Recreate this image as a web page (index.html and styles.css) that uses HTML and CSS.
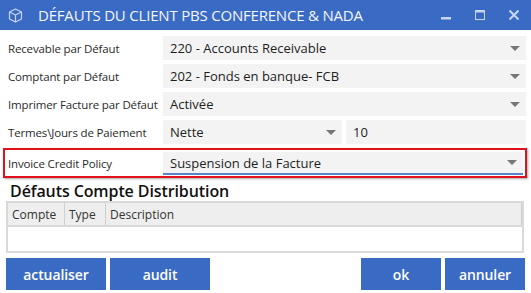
FILE: index.html
```html
<!DOCTYPE html>
<html lang="fr">
<head>
<meta charset="utf-8">
<link rel="stylesheet" href="styles.css">
</head>
<body>
<div class="window">
  <div class="titlebar">
    <svg class="app-icon" width="15" height="15" viewBox="0 0 15 15">
      <path d="M7.5 1 L13.5 4 L13.5 11 L7.5 14 L1.5 11 L1.5 4 Z M1.5 4 L7.5 7 L13.5 4 M7.5 7 L7.5 14" fill="none" stroke="#c9d6f0" stroke-width="1.2" stroke-linejoin="round"/>
    </svg>
    <span class="title">DÉFAUTS DU CLIENT PBS CONFERENCE &amp; NADA</span>
    <div class="controls">
      <svg width="10" height="10" viewBox="0 0 10 10"><rect x="0" y="7" width="10" height="2.5" fill="#c9d6f0"/></svg>
      <svg width="10" height="10" viewBox="0 0 10 10"><rect x="0.5" y="0.5" width="9" height="9" fill="none" stroke="#c9d6f0"/><rect x="0.5" y="0.5" width="9" height="2" fill="#c9d6f0"/></svg>
      <svg width="10" height="10" viewBox="0 0 10 10"><path d="M0.5 0.5 L9.5 9.5 M9.5 0.5 L0.5 9.5" stroke="#c9d6f0" stroke-width="2"/></svg>
    </div>
  </div>

  <div class="form">
    <div class="row">
      <label class="label">Recevable par Défaut</label>
      <div class="field select"><span>220 - Accounts Receivable</span><i class="arrow"></i></div>
    </div>
    <div class="row">
      <label class="label">Comptant par Défaut</label>
      <div class="field select"><span>202 - Fonds en banque- FCB</span><i class="arrow"></i></div>
    </div>
    <div class="row">
      <label class="label">Imprimer Facture par Défaut</label>
      <div class="field select"><span>Activée</span><i class="arrow"></i></div>
    </div>
    <div class="row">
      <label class="label">Termes\Jours de Paiement</label>
      <div class="split">
        <div class="field select terms"><span>Nette</span><i class="arrow"></i></div>
        <div class="field days"><span>10</span></div>
      </div>
    </div>
    <div class="row highlight">
      <label class="label">Invoice Credit Policy</label>
      <div class="field select focused"><span>Suspension de la Facture</span><i class="arrow"></i></div>
    </div>
  </div>

  <h2 class="section">Défauts Compte Distribution</h2>
  <div class="grid">
    <div class="grid-head">
      <div class="col c1">Compte</div>
      <div class="col c2">Type</div>
      <div class="col c3">Description</div>
    </div>
    <div class="grid-body"></div>
  </div>

  <div class="buttons">
    <button class="btn w100">actualiser</button>
    <button class="btn w100">audit</button>
    <span class="spacer"></span>
    <button class="btn w80">ok</button>
    <button class="btn w80">annuler</button>
  </div>
</div>
</body>
</html>
```

FILE: styles.css
```css
* { box-sizing: border-box; }
html, body { margin: 0; padding: 0; background: #fff; }
body {
  width: 531px;
  height: 293px;
  overflow: hidden;
  font-family: "Open Sans", "Noto Sans", sans-serif;
  color: #222;
}
.titlebar {
  height: 30px;
  background: #3a6bc4;
  display: flex;
  align-items: center;
  padding-left: 8px;
  color: #fff;
}
.app-icon { margin-top: 1px; }
.title {
  margin-left: 15px;
  font-size: 15px;
  letter-spacing: -0.2px;
  color: #f4f6fb;
  font-weight: 400;
}
.controls {
  margin-left: auto;
  display: flex;
  gap: 24px;
  padding-right: 12px;
  align-items: center;
}
.form {
  padding: 6px 5px 0 3px;
  display: flex;
  flex-direction: column;
  gap: 4px;
}
.row {
  display: flex;
  align-items: center;
  height: 24px;
}
.label {
  width: 160px;
  padding-left: 5px;
  font-size: 11.5px;
  color: #2a2a2a;
  white-space: nowrap;
  letter-spacing: -0.15px;
}
.field {
  height: 24px;
  background: #f3f3f3;
  display: flex;
  align-items: center;
  padding-left: 7px;
  font-size: 13px;
  color: #1e1e1e;
  position: relative;
}
.select { flex: 1; }
.arrow {
  margin-left: auto;
  margin-right: 6px;
  width: 0;
  height: 0;
  border-left: 5.5px solid transparent;
  border-right: 5.5px solid transparent;
  border-top: 5.5px solid #777;
}
.split {
  flex: 1;
  display: flex;
  gap: 4px;
}
.terms { flex: 0 0 179px; }
.days { flex: 1; }
.highlight {
  height: 30px;
  margin-top: 0;
  border: 2px solid #e2101a;
  box-shadow: 1px 1px 2px rgba(0,0,0,0.35);
  margin-right: -1px;
}
.highlight .label { width: 158px; padding-left: 3px; }
.focused {
  height: 23px;
  margin-top: 1px;
  border-bottom: 2px solid #5b84c8;
  margin-right: 2px;
}
.section {
  margin: 3px 0 0 10px;
  font-size: 16px;
  font-weight: 600;
  color: #111;
  line-height: 20px;
  letter-spacing: -0.1px;
}
.grid {
  margin: 0 7px 0 6px;
  border: 2px solid #d9d9d9;
  height: 52px;
}
.grid-head {
  display: flex;
  height: 24px;
  background: #eeeeee;
  border-bottom: 2px solid #d9d9d9;
  font-size: 12px;
  color: #333;
}
.col {
  display: flex;
  align-items: center;
  padding-left: 4px;
  border-right: 1px solid #cfcfcf;
}
.c1 { width: 57px; }
.c2 { width: 41px; }
.c3 { flex: 1; border-right: 1px solid #cfcfcf; }
.buttons {
  display: flex;
  gap: 4px;
  margin: 5px 6px 0 6px;
}
.spacer { flex: 1; }
.btn {
  height: 32px;
  background: #3a6bc4;
  color: #fff;
  border: 0;
  font-family: "Open Sans", "Noto Sans", sans-serif;
  font-weight: 600;
  font-size: 14px;
  padding: 0;
  letter-spacing: -0.1px;
}
.w100 { width: 100px; }
.w80 { width: 80px; }
```
